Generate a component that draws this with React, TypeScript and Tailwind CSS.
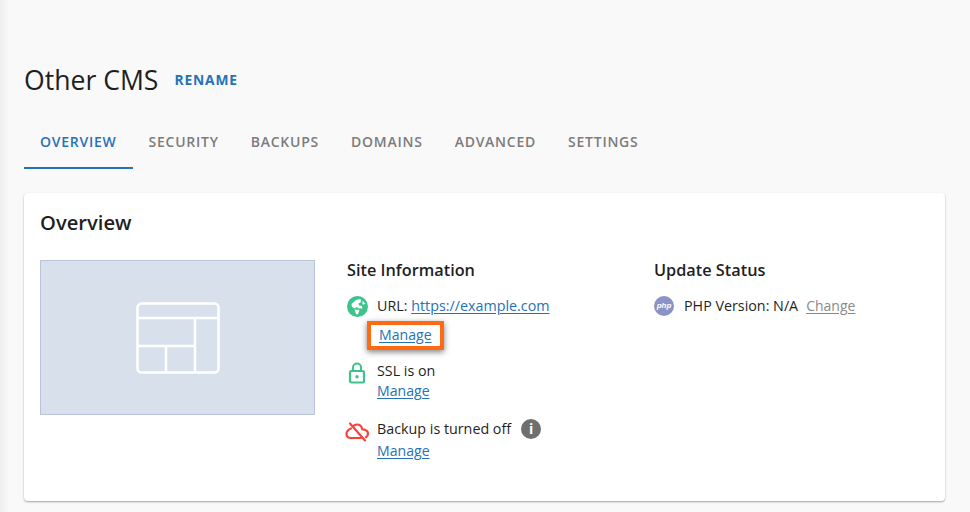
const fontStack = "font-['Open_Sans',sans-serif]"

function GlobeIcon() {
  return (
    <svg className="h-[21px] w-[21px]" viewBox="0 0 21 21">
      <circle cx="10.5" cy="10.5" r="10.5" fill="#3cc48d" />
      <path
        d="M4.500 8 L9 4 L13.500 3 L14 6 L11.500 7.500 L12 9.500 L15 10 L15.500 12.500 L12 12.500 L9.500 11 L8 12.500 L5 11 Z M7.500 13.500 L12.500 14 L11 18.500 L9 18 Z M15.500 4.500 L18.500 8 L15.500 8.500 Z"
        fill="#ffffff"
      />
    </svg>
  )
}

function LockIcon() {
  return (
    <svg className="h-[22px] w-[18px]" viewBox="0 0 18 22" fill="none">
      <path d="M5 9V5.500a4 4 0 0 1 8 0V9" stroke="#3cc48d" strokeWidth="2" />
      <rect x="2" y="9" width="14" height="11.500" rx="1.500" stroke="#3cc48d" strokeWidth="2.200" />
      <circle cx="9" cy="14.800" r="1.700" fill="#3cc48d" />
    </svg>
  )
}

function CloudOffIcon() {
  return (
    <svg className="h-[20px] w-[25px]" viewBox="0 0 25 20" fill="none" stroke="#f9423a" strokeWidth="2.200" strokeLinecap="round" strokeLinejoin="round">
      <path d="M6 6.500C3.500 7.500 1.500 9.500 1.500 12c0 2.500 2 4 4.500 4h10" />
      <path d="M9 3.500c1-.6 2-1 3-1 2.500 0 4.500 1.600 5 4 0 .5.200.8.700.8 2.800.2 5.300 1.800 5.300 4.500 0 1.500-.8 2.800-2 3.500" />
      <path d="M5 1.500L20 18.500" />
    </svg>
  )
}

function PhpBadge() {
  return (
    <span className="flex h-5 w-5 items-center justify-center rounded-full bg-[#8b93c4] font-['Liberation_Sans',sans-serif] text-[8px] font-bold italic leading-none text-white">
      php
    </span>
  )
}

function LayoutIcon() {
  return (
    <svg className="h-[72px] w-[84px]" viewBox="0 0 84 72" fill="none" stroke="#ffffff" strokeWidth="2.500">
      <rect x="1.500" y="1.500" width="81" height="69" rx="4" />
      <path d="M2 16H82M59 16V70M2 44H59M30 44V70" />
    </svg>
  )
}

function ManageLink() {
  return <a className="text-[14.100px] text-[#2672b8] underline underline-offset-2">Manage</a>
}

export default function App() {
  const tabs = ["SECURITY", "BACKUPS", "DOMAINS", "ADVANCED", "SETTINGS"]

  return (
    <div className={`${fontStack} h-[512px] w-[970px] overflow-hidden bg-[#f9f9fa] bg-gradient-to-r from-[#eeeeee] from-0% to-[#f9f9fa] to-[1%] pl-6 pr-6 pt-[61px] text-[#1f1f1f]`}>
      <div className="flex items-center">
        <h1 className="text-[26.600px] leading-[38px]">Other CMS</h1>
        <a className="ml-4 mt-[1px] text-[13.800px] font-bold tracking-[0.85px] text-[#2672b8]">RENAME</a>
      </div>

      <div className="mt-[21px] flex h-[49px] text-[14px] font-semibold tracking-[0.75px] text-[#7c7c7c]">
        <div className="flex items-center border-b-2 border-[#2672b8] px-4 pb-[5px] text-[#2672b8]">OVERVIEW</div>
        {tabs.map((t) => (
          <div key={t} className="flex items-center px-4 pb-[7px]">{t}</div>
        ))}
      </div>

      <div className="mt-6 h-[308px] w-[921px] rounded-[4px] bg-white px-4 pt-[15px] shadow-[0_1px_2px_rgba(0,0,0,0.35)]">
        <h2 className="text-[20.200px] font-semibold leading-[28px]">Overview</h2>

        <div className="mt-[24px] flex text-[14.300px] leading-5">
          <div className="flex h-[155px] w-[275px] shrink-0 items-center justify-center border border-[#b9c4d6] bg-[#d8e0eb]">
            <LayoutIcon />
          </div>

          <div className="ml-8 w-[307px]">
            <h3 className="text-[16.300px] font-semibold leading-5">Site Information</h3>

            <div className="mt-[16px] flex h-5 items-center">
              <GlobeIcon />
              <span className="ml-[9px]">URL: <a className="text-[#2672b8] underline underline-offset-2">https://example.com</a></span>
            </div>
            <div className="ml-5 mt-[5px] flex h-[29px] w-[77px] items-center border-4 border-[#ff6a13] pb-[2px] pl-2 shadow-[0_2px_6px_rgba(0,0,0,0.5)]">
              <ManageLink />
            </div>

            <div className="mt-[11px] flex">
              <div className="ml-[1px] mt-[1px] w-[29px]"><LockIcon /></div>
              <div>
                <div>SSL is on</div>
                <ManageLink />
              </div>
            </div>

            <div className="mt-[18px] flex">
              <div className="-ml-[2px] w-[32px] pt-[3px]"><CloudOffIcon /></div>
              <div>
                <div className="flex items-center">
                  Backup is turned off
                  <span className="ml-[10px] flex h-5 w-5 items-center justify-center rounded-full bg-[#6f6f6f] text-[14px] font-bold text-white">i</span>
                </div>
                <div className="mt-[2px]"><ManageLink /></div>
              </div>
            </div>
          </div>

          <div>
            <h3 className="text-[16.300px] font-semibold leading-5">Update Status</h3>
            <div className="mt-[16px] flex h-5 items-center">
              <PhpBadge />
              <span className="ml-[10px]">PHP Version: N/A</span>
              <a className="ml-2 text-[14px] text-[#8a8a8a] underline underline-offset-2">Change</a>
            </div>
          </div>
        </div>
      </div>
    </div>
  )
}
